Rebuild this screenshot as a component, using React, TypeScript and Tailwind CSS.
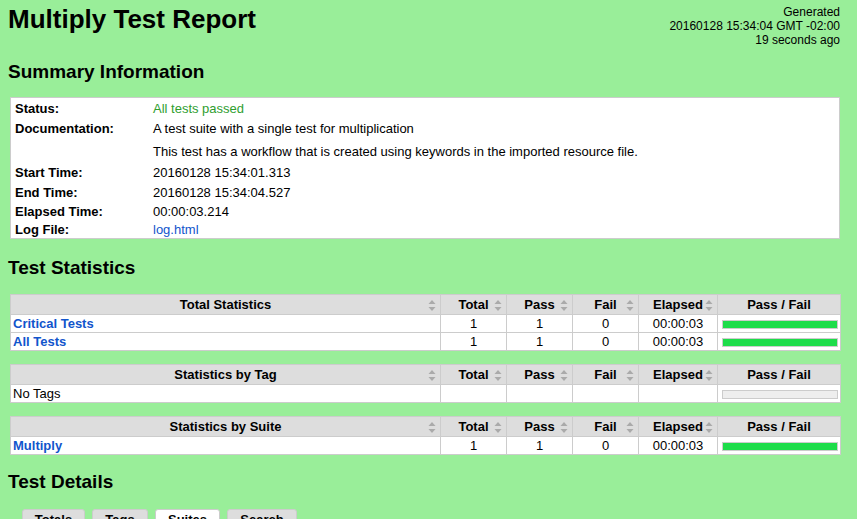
import React from "react";

const font = { fontFamily: '"Liberation Sans", Arial, Helvetica, sans-serif' };

function SortIcon() {
  return (
    <svg width="8" height="11" viewBox="0 0 8 11" className="absolute right-[4px] top-[5px]">
      <path d="M4 0 L7.5 4 L0.5 4 Z" fill="#aaa" />
      <path d="M4 11 L7.5 7 L0.5 7 Z" fill="#aaa" />
    </svg>
  );
}

function Bar({ empty }: { empty?: boolean }) {
  return (
    <div className="ml-[4px] mr-[2px] h-[9px] border border-[#ccc] bg-[#eee]">
      {!empty && <div className="h-full w-full bg-[#1ddd4a]" />}
    </div>
  );
}

type Row = { name: string; link?: boolean; total?: string; pass?: string; fail?: string; elapsed?: string; empty?: boolean };

function StatTable({ title, rows, className }: { title: string; rows: Row[]; className?: string }) {
  const th = "relative h-[20px] border border-[#ccc] bg-[#ddd] p-0 pt-[1px] text-center font-bold text-[13px] leading-[18px]";
  const td = "h-[18px] border border-[#ccc] p-0 pt-[1px] text-center text-[13px] leading-[16px]";
  return (
    <table className={"ml-[10px] w-[830px] border-collapse table-fixed bg-white " + (className || "")}>
      <colgroup>
        <col className="w-[430px]" />
        <col className="w-[66px]" />
        <col className="w-[66px]" />
        <col className="w-[66px]" />
        <col className="w-[79px]" />
        <col className="w-[123px]" />
      </colgroup>
      <thead>
        <tr>
          <th className={th}>
            {title}
            <SortIcon />
          </th>
          <th className={th}>
            Total
            <SortIcon />
          </th>
          <th className={th}>
            Pass
            <SortIcon />
          </th>
          <th className={th}>
            Fail
            <SortIcon />
          </th>
          <th className={th}>
            Elapsed
            <SortIcon />
          </th>
          <th className={th}>Pass / Fail</th>
        </tr>
      </thead>
      <tbody>
        {rows.map((r) => (
          <tr key={r.name}>
            <td className={td + " text-left pl-[2px] " + (r.link ? "font-bold text-[#1155cc]" : "text-black")}>{r.name}</td>
            <td className={td}>{r.total}</td>
            <td className={td}>{r.pass}</td>
            <td className={td}>{r.fail}</td>
            <td className={td}>{r.elapsed}</td>
            <td className={td}>
              <Bar empty={r.empty} />
            </td>
          </tr>
        ))}
      </tbody>
    </table>
  );
}

export default function App() {
  const label = "w-[142px] pl-[4px] align-top font-bold";
  return (
    <div style={font} className="h-[519px] w-[857px] overflow-hidden bg-[#99ee99] text-black">
      <div className="flex items-start justify-between pl-[8px] pr-[17px]">
        <h1 className="pt-[4px] text-[26px] font-bold leading-[30px]">Multiply Test Report</h1>
        <div className="pt-[5px] text-right text-[12px] leading-[14px]">
          <div>Generated</div>
          <div>20160128 15:34:04 GMT -02:00</div>
          <div>19 seconds ago</div>
        </div>
      </div>

      <h2 className="ml-[8px] mt-[13px] text-[19px] font-bold leading-[24px]">Summary Information</h2>

      <div className="ml-[10px] mt-[13px] w-[830px] border border-[#ccc] bg-white pt-[1px] text-[13px]">
        <table className="w-full border-collapse">
          <tbody>
            <tr className="h-[20px]">
              <td className={label + " leading-[20px]"}>Status:</td>
              <td className="leading-[20px] text-[#2f9e2f]">All tests passed</td>
            </tr>
            <tr className="h-[44px]">
              <td className={label + " leading-[20px]"}>Documentation:</td>
              <td className="align-top leading-[20px]">
                <p>A test suite with a single test for multiplication</p>
                <p className="mt-[3px]">This test has a workflow that is created using keywords in the imported resource file.</p>
              </td>
            </tr>
            <tr className="h-[20px]">
              <td className={label + " leading-[20px]"}>Start Time:</td>
              <td className="leading-[20px]">20160128 15:34:01.313</td>
            </tr>
            <tr className="h-[19px]">
              <td className={label + " leading-[19px]"}>End Time:</td>
              <td className="leading-[19px]">20160128 15:34:04.527</td>
            </tr>
            <tr className="h-[19px]">
              <td className={label + " leading-[19px]"}>Elapsed Time:</td>
              <td className="leading-[19px]">00:00:03.214</td>
            </tr>
            <tr className="h-[17px]">
              <td className={label + " leading-[17px]"}>Log File:</td>
              <td className="leading-[17px] text-[#1155cc]">log.html</td>
            </tr>
          </tbody>
        </table>
      </div>

      <h2 className="ml-[8px] mt-[17px] text-[19px] font-bold leading-[24px]">Test Statistics</h2>

      <StatTable
        className="mt-[14px]"
        title="Total Statistics"
        rows={[
          { name: "Critical Tests", link: true, total: "1", pass: "1", fail: "0", elapsed: "00:00:03" },
          { name: "All Tests", link: true, total: "1", pass: "1", fail: "0", elapsed: "00:00:03" },
        ]}
      />
      <StatTable className="mt-[13px]" title="Statistics by Tag" rows={[{ name: "No Tags", empty: true }]} />
      <StatTable
        className="mt-[13px]"
        title="Statistics by Suite"
        rows={[{ name: "Multiply", link: true, total: "1", pass: "1", fail: "0", elapsed: "00:00:03" }]}
      />

      <h2 className="ml-[8px] mt-[15px] text-[19px] font-bold leading-[24px]">Test Details</h2>

      <div className="ml-[22px] mt-[15px] flex gap-[7px] text-[13px] font-bold">
        <div className="w-[63px] rounded-t-[3px] border border-[#ccc] bg-[#ddd] pt-[1px] text-center leading-[18px]">Totals</div>
        <div className="w-[56px] rounded-t-[3px] border border-[#ccc] bg-[#ddd] pt-[1px] text-center leading-[18px]">Tags</div>
        <div className="w-[65px] rounded-t-[3px] border border-[#ccc] bg-white pt-[1px] text-center leading-[18px]">Suites</div>
        <div className="w-[70px] rounded-t-[3px] border border-[#ccc] bg-[#ddd] pt-[1px] text-center leading-[18px]">Search</div>
      </div>
    </div>
  );
}
